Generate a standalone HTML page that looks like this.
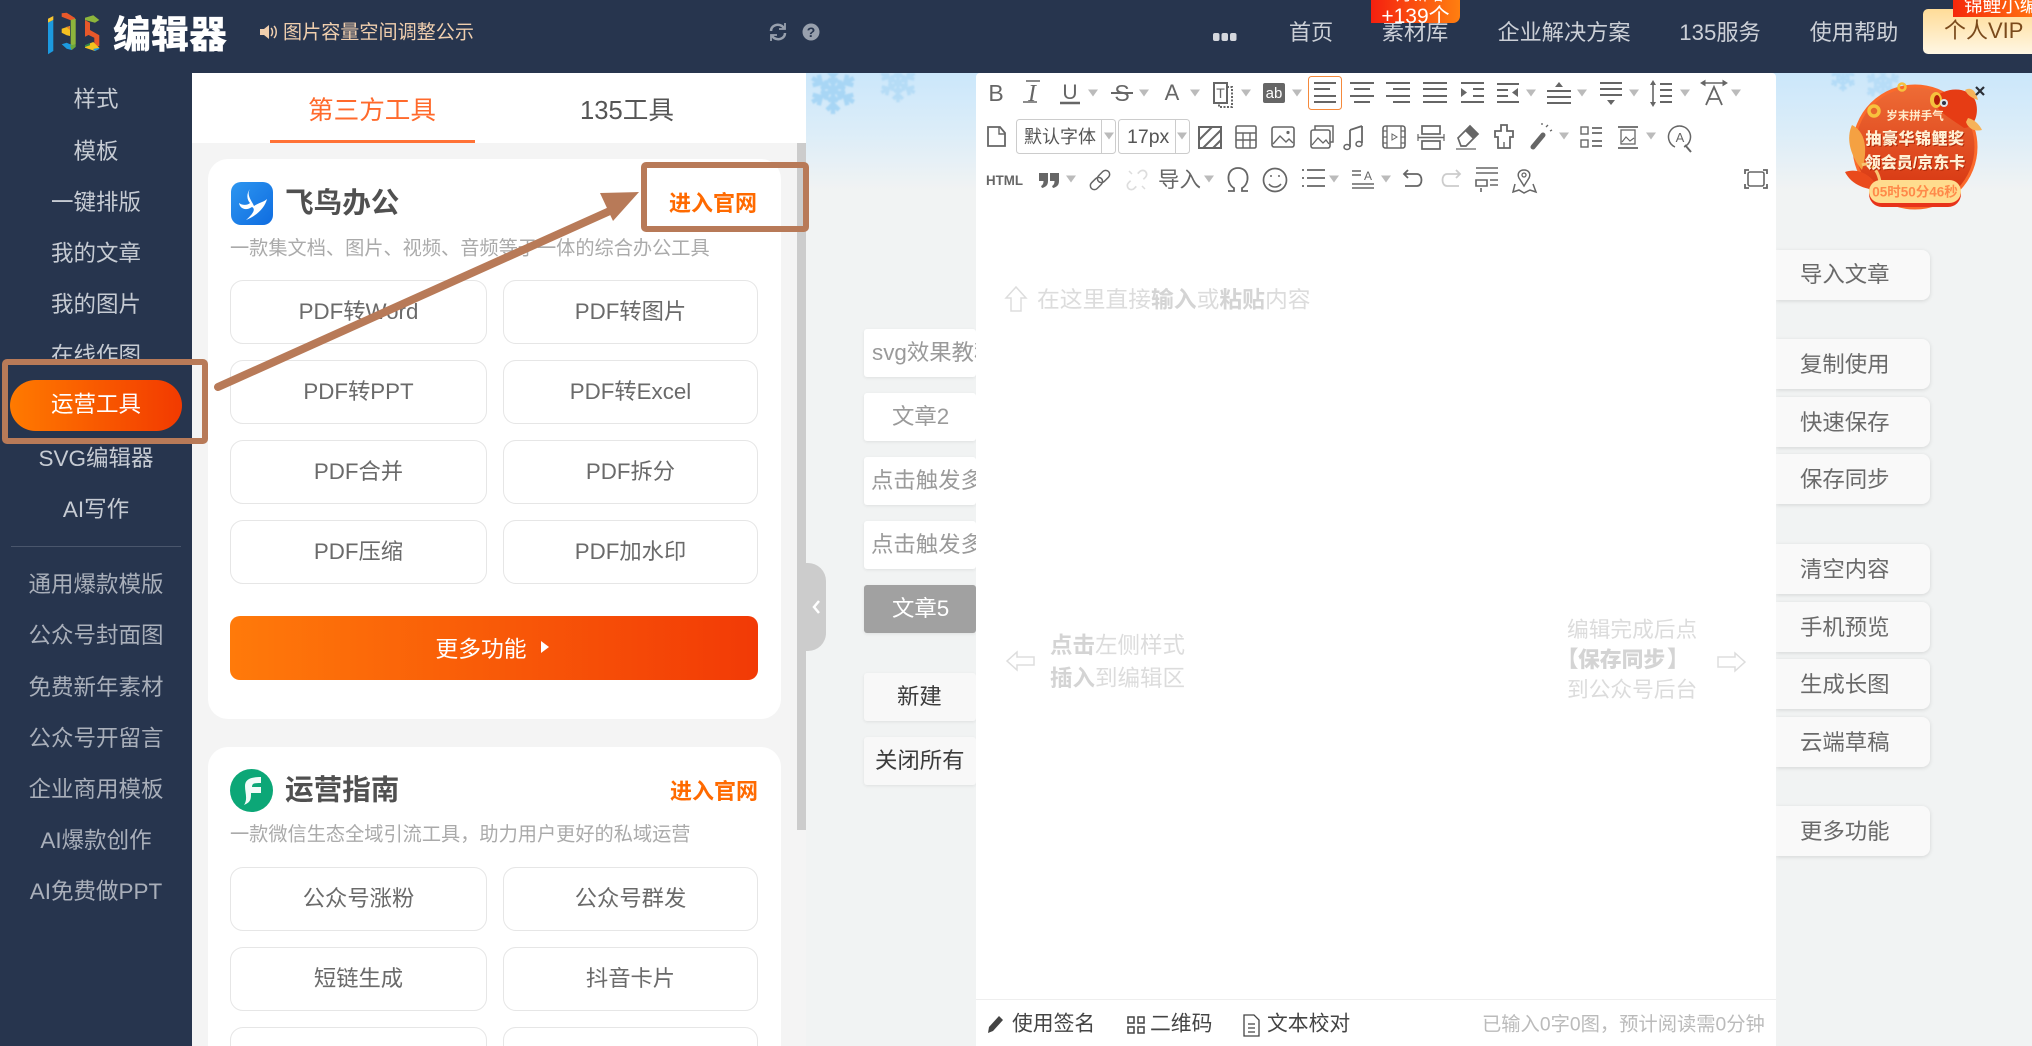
<!DOCTYPE html>
<html lang="zh-CN"><head><meta charset="utf-8"><title>135编辑器</title>
<style>
html,body{margin:0;padding:0;width:2032px;height:1046px;overflow:hidden}
body{font-family:"Liberation Sans","Noto Sans CJK SC",sans-serif;color:#666;background:#f1f3f3}
#root{position:relative;width:2032px;height:1046px;overflow:hidden;background:#f1f3f3}
div,span,svg{box-sizing:border-box}
.a{position:absolute}
.c{position:absolute;transform:translate(-50%,-50%);white-space:nowrap;line-height:1}
.l{position:absolute;transform:translateY(-50%);white-space:nowrap;line-height:1}
.side{font-size:22.5px;color:#c6cbd3;left:96px;margin-top:2px}
.nav{font-size:22.2px;color:#ccd0d7}
.btn{position:absolute;width:257px;height:64px;border:1px solid #e6e6e6;border-radius:13px;background:#fff;font-size:22.3px;color:#6a6a6a;display:flex;align-items:center;justify-content:center;white-space:nowrap;padding-bottom:4px}
.r2{width:255px}
.go{font-size:22px;font-weight:700;color:#ff6a00}
.sub{font-size:19.2px;color:#aaa;left:230px;margin-top:1px}
.ttl{font-size:28.6px;font-weight:700;color:#505050;left:285px;margin-top:1px}
.tab{position:absolute;left:864px;width:112px;height:48px;border-radius:3px;background:#fff;box-shadow:0 1px 3px rgba(0,0,0,.08);font-size:22.4px;color:#9a9a9a;line-height:48px;white-space:nowrap;overflow:hidden}
.rb{position:absolute;left:1776px;width:154px;height:50px;background:#f9f9f9;border-radius:0 8px 8px 0;box-shadow:0 1px 4px rgba(0,0,0,.12);font-size:22.4px;color:#6a6a6a;line-height:52px;padding-left:24px;white-space:nowrap}
.hint{font-size:22.5px;color:#dcdcdc}
.hint b{color:#d4d4d4}
</style></head><body><div id="root">

<!-- editor background -->
<div class="a" style="left:806px;top:73px;width:1226px;height:973px;background:linear-gradient(180deg,#cbe7fb 0,#dcedf8 60px,#f1f3f3 118px,#f1f3f3 100%)"></div>
<svg class="a" style="left:806px;top:73px;filter:blur(.8px)" width="1226" height="60" fill="none" stroke="#a8d6f5" stroke-width="4.500">
<defs><g id="fl"><path id="arm" d="M0 0V-24M-6-20L0-14L6-20M-5-11L0-7L5-11"/><use href="#arm" transform="rotate(60)"/><use href="#arm" transform="rotate(120)"/><use href="#arm" transform="rotate(180)"/><use href="#arm" transform="rotate(240)"/><use href="#arm" transform="rotate(300)"/></g></defs>
<use href="#fl" transform="translate(27,17)"/>
<use href="#fl" transform="translate(92,10) scale(.8)" opacity=".65"/>
<use href="#fl" transform="translate(1037,5) scale(.55)" opacity=".7"/>
<use href="#fl" transform="translate(1077,12) scale(.75)" opacity=".6"/>
</svg>

<!-- right buttons -->
<div class="rb" style="top:250px;line-height:50px">导入文章</div>
<div class="rb" style="top:339px">复制使用</div>
<div class="rb" style="top:397px">快速保存</div>
<div class="rb" style="top:454px">保存同步</div>
<div class="rb" style="top:544px">清空内容</div>
<div class="rb" style="top:602px">手机预览</div>
<div class="rb" style="top:659px">生成长图</div>
<div class="rb" style="top:717px">云端草稿</div>
<div class="rb" style="top:806px">更多功能</div>

<!-- middle tabs -->
<div class="tab" style="top:329px;padding-left:8px">svg效果教程</div>
<div class="tab" style="top:393px;padding-left:28px">文章2</div>
<div class="tab" style="top:457px;padding-left:7px">点击触发多图</div>
<div class="tab" style="top:521px;padding-left:7px">点击触发多图</div>
<div class="tab" style="top:585px;padding-left:28px;background:#a1a1a1;color:#fff">文章5</div>
<div class="tab" style="top:673px;padding-left:33px;background:#f8f8f8;color:#3c3c3c">新建</div>
<div class="tab" style="top:737px;padding-left:11px;background:#f8f8f8;color:#3c3c3c">关闭所有</div>

<!-- editor -->
<div class="a" style="left:976px;top:73px;width:800px;height:973px;background:#fff;border-radius:4px 4px 0 0"></div>
<div class="a" style="left:976px;top:999px;width:800px;height:1px;background:#eee"></div>

<!-- toolbar -->
<svg class="a" style="left:0;top:0;z-index:2" width="2032" height="220" fill="none" stroke="#666" stroke-width="2" font-family="'Liberation Sans','Noto Sans CJK SC',sans-serif">
<defs><path id="dn" d="M-5-3.5H5L0 3.5Z" fill="#bbb" stroke="none"/></defs>
<!-- row 1 -->
<g fill="#666" stroke="none" font-size="23">
<text x="996" y="101" text-anchor="middle">B</text>
<text x="1032" y="101" text-anchor="middle" font-family="'Liberation Serif',serif" font-style="italic" font-size="24">I</text>
<text x="1070" y="99" text-anchor="middle" font-size="21">U</text>
<text x="1122" y="101" text-anchor="middle" font-size="23">S</text>
<text x="1172" y="100" text-anchor="middle" font-size="22">A</text>
</g>
<path d="M1060 103H1080" stroke-width="2.500"/><path d="M1111 93H1133"/><path d="M1026 81H1040M1023 102H1037" stroke-width="1.600"/>
<rect x="1214" y="83" width="13" height="20"/><path d="M1227 87H1232V107H1219V103" stroke-dasharray="2 1.500"/>
<text x="1220.500" y="98" text-anchor="middle" font-size="14" fill="#666" stroke="none">T</text>
<rect x="1263" y="83" width="22" height="20" rx="2" fill="#666" stroke="none"/>
<text x="1274" y="98" text-anchor="middle" font-size="15" fill="#fff" stroke="none">ab</text>
<rect x="1308.500" y="76.500" width="33" height="33" rx="3" stroke="#f58a3c" stroke-width="1"/>
<path d="M1314 83H1336M1314 89H1330M1314 96H1336M1314 102H1336"/>
<path d="M1350 83H1374M1354 89H1370M1350 96H1374M1354 102H1370"/>
<path d="M1386 83H1410M1393 89H1410M1386 96H1410M1393 102H1410"/>
<path d="M1423 83H1447M1423 89H1447M1423 96H1447M1423 102H1447"/>
<path d="M1461 83H1484M1473 89H1484M1473 96H1484M1461 102H1484"/><path d="M1461 88V97L1467 92.500Z" fill="#666" stroke="none"/>
<path d="M1497 84H1519M1497 90H1508M1497 96H1508M1497 102H1519"/><path d="M1518 88V97L1512 92.500Z" fill="#666" stroke="none"/>
<path d="M1547 91H1571M1547 97H1571M1547 103H1571"/><path d="M1555 87L1559 82L1563 87Z" fill="#666" stroke="none"/>
<path d="M1600 83H1622M1600 89H1622M1600 95H1622"/><path d="M1607 100L1611 105L1615 100Z" fill="#666" stroke="none"/>
<path d="M1653 83V104" stroke-width="1.600"/><path d="M1650 85L1653 80L1656 85ZM1650 102L1653 107L1656 102Z" fill="#666" stroke="none"/>
<path d="M1660 84H1672M1660 90H1672M1660 96H1672M1660 102H1672"/>
<path d="M1702 83H1726" stroke-width="1.600"/><path d="M1705 80.500L1701 83L1705 85.500ZM1723 80.500L1727 83L1723 85.500Z" fill="#666" stroke="#666" stroke-width="1"/>
<path d="M1706 105L1714 87L1722 105M1709 99H1719" stroke-width="1.800"/>
<use href="#dn" x="1093" y="93"/><use href="#dn" x="1144" y="93"/><use href="#dn" x="1195" y="93"/><use href="#dn" x="1246" y="93"/><use href="#dn" x="1297" y="93"/><use href="#dn" x="1531" y="93"/><use href="#dn" x="1582" y="93"/><use href="#dn" x="1634" y="93"/><use href="#dn" x="1685" y="93"/><use href="#dn" x="1736" y="93"/>
<!-- row 2 -->
<path d="M988 127H1000L1005 133V146H988Z" stroke-width="1.800"/><path d="M999 127V134H1005" stroke-width="1.400"/>
<rect x="1016.500" y="119.500" width="99" height="34" rx="3" stroke="#ccc" stroke-width="1"/><path d="M1101.500 120V153" stroke="#ccc" stroke-width="1"/><use href="#dn" x="1109" y="136"/>
<text x="1024" y="143" font-size="18" fill="#555" stroke="none">默认字体</text>
<rect x="1118.500" y="119.500" width="71" height="34" rx="3" stroke="#ccc" stroke-width="1"/><path d="M1175.500 120V153" stroke="#ccc" stroke-width="1"/><use href="#dn" x="1182" y="136"/>
<text x="1127" y="143" font-size="19.500" fill="#555" stroke="none">17px</text>
<rect x="1199" y="127" width="22" height="21" stroke-width="2"/><path d="M1199 140L1212 127M1203 148L1221 130M1213 148L1221 140" stroke-width="2"/>
<rect x="1236" y="126" width="20" height="22" rx="1.500" stroke-width="1.600"/><path d="M1236 133H1256M1236 140H1256M1243 133V148M1250 133V148" stroke-width="1.400"/>
<rect x="1272" y="127" width="22" height="20" rx="2" stroke-width="1.600"/><circle cx="1288" cy="132.500" r="1.600" fill="#666" stroke="none"/><path d="M1273 144L1280 136L1286 142L1289 139L1293 143" stroke-width="1.400"/>
<rect x="1311" y="130" width="19" height="18" rx="2" stroke-width="1.600"/><path d="M1315 130V126H1333V142H1330" stroke-width="1.500"/><path d="M1312 145L1318 138L1323 143L1326 140L1329 144" stroke-width="1.300"/>
<path d="M1350 130V147M1362 126V143M1350 130L1362 126" stroke-width="1.800"/><ellipse cx="1347" cy="147" rx="3" ry="2.500" stroke-width="1.500"/><ellipse cx="1359" cy="144" rx="3" ry="2.500" stroke-width="1.500"/>
<rect x="1383" y="126" width="22" height="22" rx="2.500" stroke-width="1.600"/><path d="M1387 126V148M1401 126V148M1383 131H1387M1383 137H1387M1383 143H1387M1401 131H1405M1401 137H1405M1401 143H1405" stroke-width="1.300"/><path d="M1392 134V140L1397 137Z" stroke-width="1"/>
<rect x="1422" y="126" width="18" height="8" stroke-width="1.700"/><rect x="1422" y="141" width="18" height="8" stroke-width="1.700"/><path d="M1418 137.500H1444" stroke-width="1.500"/><path d="M1418 134V141M1444 134V141" stroke-width="1.200"/>
<path d="M1458 138L1470 126L1478 134L1466 146H1461Z" stroke-width="1.700"/><path d="M1470 126L1478 134L1473 139L1465 131Z" fill="#666" stroke="none"/><path d="M1456 149H1476" stroke-width="1.300"/>
<path d="M1501 125H1507V131H1513V137H1510V148H1498V137H1495V131H1501Z" stroke-width="1.800"/><path d="M1504 148V142" stroke-width="1.400"/>
<path d="M1533 147L1543 135" stroke-width="5" stroke-linecap="round"/><path d="M1546 127L1548 125M1550 131L1552 130M1542 125V123" stroke-width="1.300"/>
<rect x="1581" y="127" width="7" height="7" stroke-width="1.400"/><rect x="1581" y="140" width="7" height="7" stroke-width="1.400"/><path d="M1592 128H1602M1592 133H1602M1592 141H1602M1592 146H1602" stroke-width="1.700"/>
<path d="M1618 127H1638M1618 148H1638" stroke-width="1.700"/><rect x="1621" y="130" width="14" height="14" stroke-width="1.300"/><path d="M1622 142L1626 137L1630 141L1634 138" stroke-width="1.100"/>
<path d="M1675 147A11 11 0 1 1 1684 147" stroke-width="1.500"/><path d="M1685 145L1691 152" stroke-width="2"/>
<text x="1680" y="142" text-anchor="middle" font-size="13" fill="#666" stroke="none">A</text>
<use href="#dn" x="1564" y="136"/><use href="#dn" x="1651" y="136"/>
<!-- row 3 -->
<text x="986" y="185" font-size="14" font-weight="700" fill="#666" stroke="none" textLength="37" lengthAdjust="spacingAndGlyphs">HTML</text>
<path d="M1039 173H1048V181C1048 185 1046 187 1042 188L1041 186C1043 185 1043.500 183 1043.500 181H1039ZM1050 173H1059V181C1059 185 1057 187 1053 188L1052 186C1054 185 1054.500 183 1054.500 181H1050Z" fill="#666" stroke="none"/>
<use href="#dn" x="1071" y="179"/>
<g transform="rotate(-45 1100 180)" stroke-width="1.500"><rect x="1088" y="176" width="14" height="8" rx="4"/><rect x="1098" y="176" width="14" height="8" rx="4"/></g>
<g transform="rotate(-45 1137 180)" stroke="#ddd" stroke-width="1.700"><path d="M1132 176H1129A4 4 0 0 0 1129 184H1132M1142 176H1145A4 4 0 0 1 1145 184H1142"/></g><path d="M1129 171L1132 174M1145 189L1142 186" stroke="#ddd" stroke-width="1.500"/>
<text x="1158" y="187" font-size="21.500" fill="#666" stroke="none">导入</text>
<use href="#dn" x="1209" y="179"/>
<path d="M1228 191H1234V188C1226 184 1226 168 1238 168C1250 168 1250 184 1242 188V191H1248" stroke-width="1.800"/>
<circle cx="1275" cy="180" r="11.500" stroke-width="1.700"/><path d="M1269 184C1272 188 1278 188 1281 184M1271 175V177M1279 175V177" stroke-width="1.500"/>
<path d="M1307 170H1325M1307 178H1325M1307 186H1325" stroke-width="1.800"/><path d="M1302 170H1304M1302 178H1304M1302 186H1304" stroke-width="1.800"/>
<use href="#dn" x="1334" y="179"/>
<path d="M1352 171H1361M1352 175H1361M1352 184H1374M1352 188H1374" stroke-width="1.600"/>
<text x="1368" y="180" text-anchor="middle" font-size="12" fill="#666" stroke="none">A</text>
<use href="#dn" x="1386" y="179"/>
<path d="M1408 170L1404 174L1408 178M1404 174H1417C1423 174 1423 186 1417 186H1405" stroke-width="1.800"/>
<path d="M1456 170L1460 174L1456 178M1460 174H1447C1441 174 1441 186 1447 186H1459" stroke="#ccc" stroke-width="1.800"/>
<path d="M1476 168H1498M1476 173H1498M1476 180H1487V186H1476ZM1490 180H1498M1490 185H1498M1481 188V192" stroke-width="1.600"/>
<path d="M1524 170C1519 170 1517 174 1519 178L1524 186L1529 178C1531 174 1529 170 1524 170ZM1515 184L1513 192L1519 190L1524 193L1530 190L1536 192L1533 184" stroke-width="1.500"/><circle cx="1524" cy="175" r="2" stroke-width="1.300"/>
<path d="M1745 174V170H1749M1763 170H1767V174M1767 184V188H1763M1749 188H1745V184" stroke-width="1.800"/><rect x="1748" y="172" width="16" height="14" rx="2" stroke-width="1.600"/>
</svg>

<!-- hints -->
<svg class="a" style="left:0;top:0;z-index:1" width="2032" height="720" fill="none" stroke="#ddd" stroke-width="1.500">
<path d="M1016 287L1006 298H1011V311H1021V298H1026Z"/>
<path d="M1007 661L1017 652V657H1034V665H1017V670Z"/>
<path d="M1745 662L1735 653V657H1718V667H1735V671Z"/>
</svg>
<div class="l hint" style="left:1037px;top:300px;font-size:22.8px">在这里直接<b>输入</b>或<b>粘贴</b>内容</div>
<div class="l hint" style="left:1050px;top:646px"><b>点击</b>左侧样式</div>
<div class="l hint" style="left:1050px;top:679px"><b>插入</b>到编辑区</div>
<div class="l hint" style="left:1567px;top:630px;font-size:21.700px">编辑完成后点</div>
<div class="l hint" style="left:1556px;top:660px;font-weight:700"><b>【</b></div>
<div class="l hint" style="left:1578px;top:660px;font-size:21.800px;font-weight:700"><b>保存同步</b></div>
<div class="l hint" style="left:1667px;top:660px;font-weight:700"><b>】</b></div>
<div class="l hint" style="left:1567px;top:690px;font-size:21.700px">到公众号后台</div>

<!-- status bar -->
<svg class="a" style="left:985px;top:1012px" width="290" height="28" fill="none" stroke="#444">
<path d="M3 21L4 15L14 4L18 8L8 19Z" fill="#444" stroke="none"/>
<path d="M143 5H149V11H143ZM153 5H159V11H153ZM143 15H149V21H143ZM153 15H159V21H153Z" stroke-width="1.500"/>
<path d="M259 3H269L274 8V24H259ZM263 12H270M263 16H270M263 20H270" stroke-width="1.300"/>
</svg>
<div class="l" style="left:1012px;top:1025px;font-size:20.800px;color:#444">使用签名</div>
<div class="l" style="left:1150px;top:1025px;font-size:20.800px;color:#444">二维码</div>
<div class="l" style="left:1267px;top:1025px;font-size:20.800px;color:#444">文本校对</div>
<div class="l" style="left:1482px;top:1025px;font-size:19.300px;color:#bbb">已输入0字0图，预计阅读需0分钟</div>

<!-- tool panel -->
<div class="a" style="left:192px;top:143px;width:614px;height:903px;background:#f4f4f4"></div>
<div class="a" style="left:192px;top:73px;width:614px;height:70px;background:#fff"></div>
<div class="a" style="left:270px;top:140px;width:205px;height:3px;background:#ff7236"></div>
<div class="c" style="left:372px;top:112px;font-size:25.600px;color:#ff6a2c">第三方工具</div>
<div class="c" style="left:627px;top:112px;font-size:25.600px;color:#555">135工具</div>
<div class="a" style="left:797px;top:143px;width:9px;height:687px;background:#ccc"></div>

<div class="a" style="left:208px;top:159px;width:573px;height:560px;background:#fff;border-radius:20px"></div>
<div class="a" style="left:208px;top:747px;width:573px;height:320px;background:#fff;border-radius:20px"></div>

<svg class="a" style="left:230px;top:181px" width="44" height="46"><defs><linearGradient id="bl" x1="0" y1="0" x2="1" y2="1"><stop offset="0" stop-color="#2d96f0"/><stop offset="1" stop-color="#0f6ce0"/></linearGradient></defs>
<rect x="1" y="1" width="42" height="43" rx="10" fill="url(#bl)"/>
<path d="M20 8C16 14 22 20 24 25C28 22 34 21 37 18C35 26 28 34 16 39C23 33 26 28 22 26C16 30 10 28 9 22C13 25 18 24 20 22C17 19 16 13 20 8Z" fill="#fff"/></svg>
<div class="l ttl" style="top:203px">飞鸟办公</div>
<div class="l go" style="left:669px;top:204px">进入官网</div>
<div class="l sub" style="top:248px">一款集文档、图片、视频、音频等于一体的综合办公工具</div>
<div class="btn" style="left:230px;top:280px">PDF转Word</div><div class="btn r2" style="left:503px;top:280px">PDF转图片</div>
<div class="btn" style="left:230px;top:360px">PDF转PPT</div><div class="btn r2" style="left:503px;top:360px">PDF转Excel</div>
<div class="btn" style="left:230px;top:440px">PDF合并</div><div class="btn r2" style="left:503px;top:440px">PDF拆分</div>
<div class="btn" style="left:230px;top:520px">PDF压缩</div><div class="btn r2" style="left:503px;top:520px">PDF加水印</div>
<div class="a" style="left:230px;top:616px;width:528px;height:64px;border-radius:10px;background:linear-gradient(90deg,#ff7a0a,#f23a06);color:#fff;font-size:22.800px;display:flex;align-items:center;justify-content:center;padding-bottom:2px">更多功能<svg width="26" height="16"><path d="M14 2L22 8L14 14Z" fill="#fff"/></svg></div>

<svg class="a" style="left:230px;top:769px" width="44" height="44"><circle cx="21.500" cy="21.500" r="21.500" fill="#0ca777"/><path d="M14 36C18 30 15 24 15 17C15 10 21 8 31 8V14C25 14 22 14 22 18H31V24H21C21 30 21 33 14 36Z" fill="#fff" opacity=".95"/></svg>
<div class="l ttl" style="top:790px">运营指南</div>
<div class="l go" style="left:670px;top:792px">进入官网</div>
<div class="l sub" style="top:834px">一款微信生态全域引流工具，助力用户更好的私域运营</div>
<div class="btn" style="left:230px;top:867px">公众号涨粉</div><div class="btn r2" style="left:503px;top:867px">公众号群发</div>
<div class="btn" style="left:230px;top:947px">短链生成</div><div class="btn r2" style="left:503px;top:947px">抖音卡片</div>
<div class="btn" style="left:230px;top:1027px"></div><div class="btn r2" style="left:503px;top:1027px"></div>

<!-- collapse handle -->
<div class="a" style="left:806px;top:563px;width:20px;height:88px;background:#ccc;border-radius:0 18px 18px 0"></div>
<svg class="a" style="left:810px;top:598px" width="14" height="18" fill="none" stroke="#fff" stroke-width="2.500"><path d="M9 3L4 9L9 15"/></svg>

<!-- sidebar -->
<div class="a" style="left:0;top:73px;width:192px;height:973px;background:#27354e"></div>
<div class="c side" style="top:98px">样式</div>
<div class="c side" style="top:150px">模板</div>
<div class="c side" style="top:201px">一键排版</div>
<div class="c side" style="top:252px">我的文章</div>
<div class="c side" style="top:303px">我的图片</div>
<div class="c side" style="top:354px">在线作图</div>
<div class="a" style="left:0;top:364px;width:192px;height:70px;background:#27354e"></div>
<div class="a" style="left:10px;top:380px;width:172px;height:51px;border-radius:26px;background:linear-gradient(90deg,#ff7a00,#f23a00)"></div>
<div class="c side" style="top:403px;color:#fff">运营工具</div>
<div class="c side" style="top:457px">SVG编辑器</div>
<div class="c side" style="top:508px">AI写作</div>
<div class="a" style="left:11px;top:546px;width:170px;height:1px;background:#4a566c"></div>
<div class="c side" style="top:583px;color:#a9afba">通用爆款模版</div>
<div class="c side" style="top:634px;color:#a9afba">公众号封面图</div>
<div class="c side" style="top:686px;color:#a9afba">免费新年素材</div>
<div class="c side" style="top:737px;color:#a9afba">公众号开留言</div>
<div class="c side" style="top:788px;color:#a9afba">企业商用模板</div>
<div class="c side" style="top:839px;color:#a9afba">AI爆款创作</div>
<div class="c side" style="top:890px;color:#a9afba">AI免费做PPT</div>

<!-- header -->
<div class="a" style="left:0;top:0;width:2032px;height:73px;background:#27354e"></div>
<svg class="a" style="left:0;top:0" width="110" height="60">
<path d="M48 18.700L53.300 16V20L48 22.700Z" fill="#f7c531"/><path d="M48 22.700L53.300 20V51L48 54.300Z" fill="#1c9ae0"/>
<path d="M61.700 13.300L66.700 12.700L75 18V21L70 20L61.700 16.700Z" fill="#e8582a"/><path d="M70.700 20L75.700 18.700V44.300L70.700 46Z" fill="#8db53c"/>
<path d="M61.700 28.700L70 26V36L66.700 35.300L61.700 32.700Z" fill="#f4c021"/><path d="M66 27L70 26V30Z" fill="#e8832a"/>
<path d="M61.700 44.300L66.700 42.700L75.700 46.700L71.700 50L66.700 48.700Z" fill="#1c9ae0"/><path d="M70 45.500L75.700 44.300V46.700L71.700 50Z" fill="#6aa83a"/>
<path d="M85 17.700L93.300 15.300L99.300 20L95 22.700L85 20Z" fill="#8db53c"/>
<path d="M85 20L90 22.700V34.300L85 36.700Z" fill="#e8582a"/>
<path d="M90 30L99.300 35.300V46L94.300 46.700V37.700L85 33.300Z" fill="#e8582a"/>
<path d="M85 45.300L93.300 42L99.300 47.700L95 51L85 47.700Z" fill="#f2c21f"/><path d="M93 49L99.300 47.700V49L95 51Z" fill="#1c9ae0"/><path d="M85 45.300L90 43V45.300L85 47Z" fill="#2e8b4a"/>
</svg>
<div class="l" style="left:113px;top:36px;font-size:38px;font-weight:900;color:#fff">编辑器</div>
<svg class="a" style="left:259px;top:23px" width="20" height="18"><path d="M1 6H5L10 2V16L5 12H1Z" fill="#f0cfae"/><path d="M12 5C14 7 14 11 12 13M15 3C18 6 18 12 15 15" fill="none" stroke="#f0cfae" stroke-width="1.500"/></svg>
<div class="l" style="left:283px;top:33px;font-size:19.100px;color:#f0cfae">图片容量空间调整公示</div>
<svg class="a" style="left:768px;top:22px" width="54" height="20" fill="none" stroke="#98a0ad" stroke-width="2.500"><path d="M3 9C3 4 9 1 14 4L16 6M17 11C17 16 11 19 6 16L4 14"/><path d="M17 1V7H11M3 19V13H9" stroke-width="1.800"/><circle cx="43" cy="10" r="8.500" fill="#98a0ad" stroke="none"/><text x="43" y="15" text-anchor="middle" font-size="14" font-weight="700" fill="#27354e" stroke="none" font-family="'Liberation Sans',sans-serif">?</text></svg>
<svg class="a" style="left:1212px;top:32px" width="28" height="10"><rect x="1" y="1" width="6.500" height="8" rx="2" fill="#d5d8de"/><rect x="9.500" y="1" width="6.500" height="8" rx="2" fill="#d5d8de"/><rect x="18" y="1" width="6.500" height="8" rx="2" fill="#d5d8de"/></svg>
<div class="c nav" style="left:1311px;top:33px">首页</div>
<div class="c nav" style="left:1415px;top:33px">素材库</div>
<div class="c nav" style="left:1564px;top:33px">企业解决方案</div>
<div class="c nav" style="left:1720px;top:33px">135服务</div>
<div class="c nav" style="left:1854px;top:33px">使用帮助</div>
<div class="a" style="left:1371px;top:0;width:89px;height:23px;background:linear-gradient(90deg,#f5200f,#ff7f10);border-radius:0 0 7px 0;overflow:hidden;color:#fff;font-size:21px;text-align:center"><div style="position:absolute;left:0;width:89px;top:-15px;line-height:22px;font-size:16px">2月新增</div><div style="position:absolute;left:0;width:89px;top:6px;line-height:22px">+139个</div></div>
<div class="a" style="left:1923px;top:9px;width:109px;height:45px;border-radius:5px 0 0 5px;background:linear-gradient(180deg,#ffdc98,#fff7e4)"></div>
<div class="l" style="left:1944px;top:31px;font-size:22px;color:#7a4a1c">个人VIP</div>
<div class="a" style="left:1953px;top:0;width:79px;height:17px;background:linear-gradient(90deg,#f5280c,#ff7010);overflow:hidden;color:#fff;font-size:18.600px"><div style="position:absolute;left:11px;top:-5px;line-height:22px;white-space:nowrap">锦鲤小编</div></div>

<!-- promo -->
<svg class="a" style="left:1835px;top:75px" width="170" height="145" fill="none">
<defs><linearGradient id="pr" x1="0" y1="0" x2="0" y2="1"><stop offset="0" stop-color="#ee6c36"/><stop offset="1" stop-color="#d42f0d"/></linearGradient></defs>
<g transform="translate(-1835,-75)">
<circle cx="1915" cy="147" r="61" fill="url(#pr)" stroke="#fb6a2c" stroke-width="3"/>
<path d="M1852 125C1866 132 1868 150 1862 170C1852 158 1845 140 1852 125Z" fill="#f5a142"/>
<path d="M1845 172C1856 168 1870 172 1880 190C1868 190 1852 186 1845 172Z" fill="#ea4a1c"/>
<path d="M1862 165C1872 160 1882 175 1880 190" stroke="#f8c673" stroke-width="3"/>
<path d="M1932 100C1945 86 1968 86 1975 100C1980 112 1975 128 1964 128C1950 118 1938 112 1932 100Z" fill="#e63c14"/>
<path d="M1965 90C1972 86 1976 92 1978 100C1972 98 1968 96 1965 90ZM1968 118C1976 120 1980 126 1982 130C1974 132 1968 128 1966 122Z" fill="#f6b35a"/>
<ellipse cx="1936" cy="100" rx="6" ry="8" fill="#f5c23d"/><ellipse cx="1937" cy="100" rx="3" ry="5" fill="#b21c08"/>
<circle cx="1944" cy="103" r="4" fill="#dfe4ea"/><circle cx="1944" cy="103" r="2" fill="#334"/>
<circle cx="1874" cy="111" r="5" stroke="#f7c23e" stroke-width="3.500" fill="#e8662c"/><circle cx="1902" cy="87" r="3.500" stroke="#f7c23e" stroke-width="2.500"/>
<rect x="1869" y="181" width="92" height="26" rx="13" fill="#e8331a"/>
<rect x="1869" y="180" width="92" height="23" rx="11.500" fill="#ffdc8e"/>
<path d="M1976 87L1984 95M1984 87L1976 95" stroke="#2b2f36" stroke-width="2.200"/>
</g></svg>
<div class="c" style="left:1915px;top:117px;font-size:11.500px;font-weight:700;color:#ffeccc">岁末拼手气</div>
<div class="c" style="left:1915px;top:140px;font-size:16px;font-weight:900;color:#fff0d4;letter-spacing:.5px;text-shadow:1px 1px 0 #b02808">抽豪华锦鲤奖</div>
<div class="c" style="left:1915px;top:164px;font-size:16px;font-weight:900;color:#fff0d4;text-shadow:1px 1px 0 #b02808">领会员/京东卡</div>
<div class="c" style="left:1915px;top:192px;font-size:13.500px;font-weight:700;color:#ff8a4a">05时50分46秒</div>

<!-- annotations -->
<svg class="a" style="left:0;top:0;z-index:5" width="2032" height="460" fill="none">
<rect x="5" y="362" width="200" height="79" rx="2" stroke="#b87a58" stroke-width="6"/>
<rect x="644" y="165" width="162" height="64" rx="2" stroke="#b87a58" stroke-width="6"/>
<path d="M218 387L612 210" stroke="#b87a58" stroke-width="8" stroke-linecap="round"/>
<path d="M639 192L600 193L613 221Z" fill="#b87a58"/>
</svg>
</div></body></html>
